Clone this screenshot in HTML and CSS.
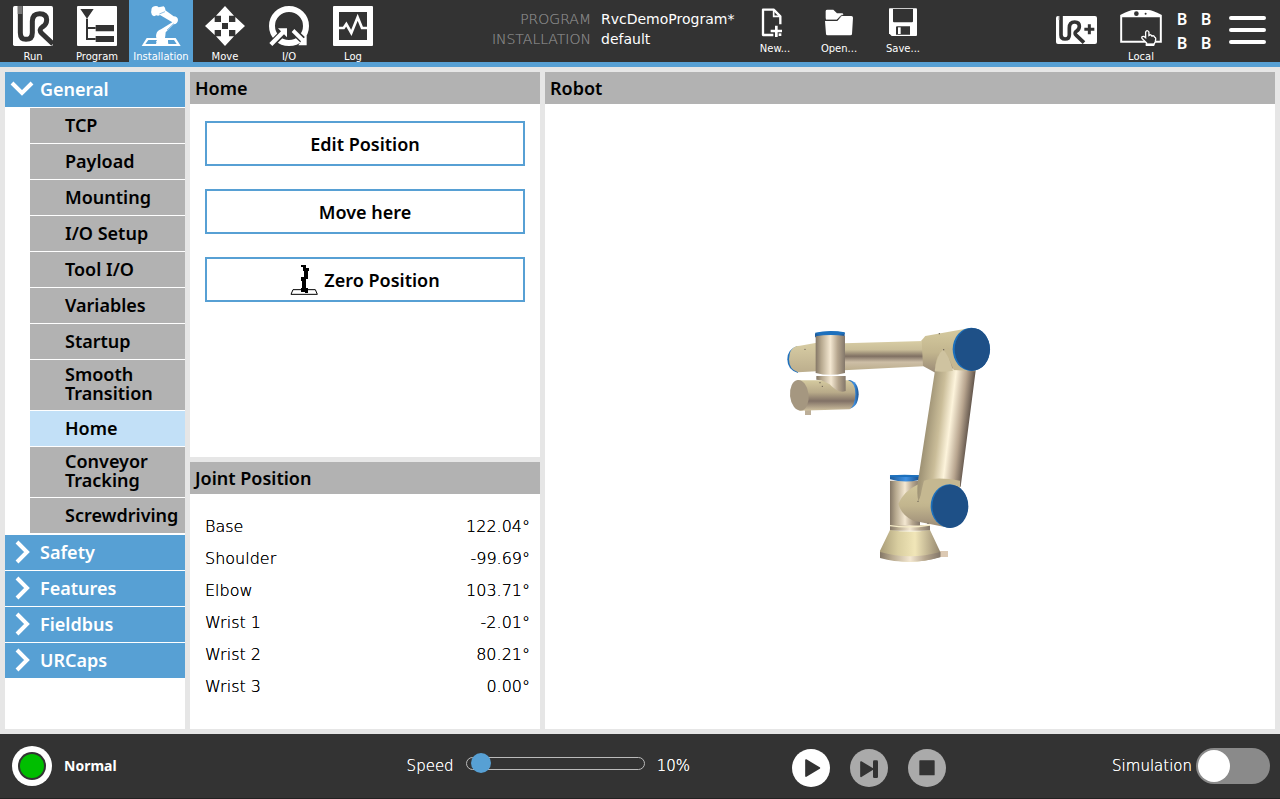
FILE: index.html
```html
<!DOCTYPE html>
<html lang="en">
<head>
<meta charset="utf-8">
<title>Installation</title>
<link rel="stylesheet" href="styles.css">
</head>
<body>
<header class="topbar">
  <nav class="tabs">
    <button class="tab" type="button">
      <svg class="tab-icon" viewBox="0 0 120 120"><rect width="120" height="120" rx="5" fill="#fff"/><g fill="none" stroke="#333" stroke-width="15"><path d="M22 0V80Q22 100 39 100Q58 100 58 80V46Q58 23 80 23Q101 23 101 41Q101 55 88 63Q76 71 86 82L120 114"/></g><path d="M14 0h14v24H14z" fill="#777"/></svg>
      <span>Run</span>
    </button>
    <button class="tab" type="button">
      <svg class="tab-icon" viewBox="0 0 120 120"><rect width="120" height="120" rx="3" fill="#fff"/><path d="M10 9H50L30 38Z M56 57h55v19H56z M56 90h55v18H56z" fill="#333"/><path d="M30 38V99H56M30 66H56" fill="none" stroke="#333" stroke-width="6"/></svg>
      <span>Program</span>
    </button>
    <button class="tab tab-active" type="button">
      <svg class="tab-icon" viewBox="0 0 120 120"><path d="M2 120L17 96H104L119 120Z" fill="#fff"/><path d="M13 114L22 102H48L45 114Z M80 102H99L107 114H82Z" fill="#57a0d4"/><path d="M45 108L50 100Q43 96 46 84Q49 73 60 70L94 49L57 27Q52 31 46 28L39 31Q28 26 31 14Q31 2 40 1Q48-2 53 4L68 1Q74 5 73 13L98 31Q110 31 111 42Q110 54 98 55L74 79Q73 91 72 96L81 101V108Z" fill="#fff"/><path d="M55 24L72 17M78 72L98 53" stroke="#57a0d4" stroke-width="2"/></svg>
      <span>Installation</span>
    </button>
    <button class="tab" type="button">
      <svg class="tab-icon" viewBox="0 0 120 120"><path fill="#fff" d="M60 0L87 29H72V48H91V33L120 60L91 87V72H72V91H87L60 120L33 91H48V72H29V87L0 60L29 33V48H48V29H33Z"/><path fill="#333" d="M51 51h18v18H51z"/></svg>
      <span>Move</span>
    </button>
    <button class="tab" type="button">
      <svg class="tab-icon" viewBox="0 0 120 120"><circle cx="60" cy="60" r="51" fill="none" stroke="#fff" stroke-width="18"/><g stroke="#333" stroke-width="21" fill="none"><path d="M4 118L50 72M68 70L116 116"/></g><path fill="#fff" d="M1 111L36 76L27 67H54V94L45 85L10 120Z M76 69L104 97L113 88V118H88L96 106L68 78Z"/></svg>
      <span>I/O</span>
    </button>
    <button class="tab" type="button">
      <svg class="tab-icon" viewBox="0 0 120 120"><rect width="120" height="120" rx="3" fill="#fff"/><path fill="#333" d="M18 18h84v84H18z"/><path d="M18 66H32L40 54L55 81L74 34L87 66H102" fill="none" stroke="#fff" stroke-width="8"/></svg>
      <span>Log</span>
    </button>
  </nav>
  <dl class="files">
    <dt>PROGRAM</dt><dd>RvcDemoProgram*</dd>
    <dt>INSTALLATION</dt><dd>default</dd>
  </dl>
  <div class="actions">
    <button class="action" type="button">
      <svg class="action-icon" viewBox="0 0 90 90"><path d="M61 49V25L41 5H9V81H40" fill="none" stroke="#fff" stroke-width="7" stroke-linejoin="round"/><path d="M41 5V25H61" fill="none" stroke="#fff" stroke-width="5"/><path d="M49 53V87M32 69H66" stroke="#fff" stroke-width="8"/><path d="M56 76h8v8h-8z" fill="#fff"/></svg>
      <span>New...</span>
    </button>
    <button class="action" type="button">
      <svg class="action-icon" viewBox="0 0 90 90"><path d="M5 29V9Q5 5 10 5H28L39 16H54Q58 16 58 20L45 31L39 35H6Z" fill="#fff"/><path d="M3 39H40L53 24H82Q87 24 87 29L84 78Q84 82 79 82H11Q6 82 6 78Z" fill="#fff"/><path d="M3 37H38L52 22H84" fill="none" stroke="#333" stroke-width="3"/></svg>
      <span>Open...</span>
    </button>
    <button class="action" type="button">
      <svg class="action-icon" viewBox="0 0 90 90"><path d="M5 1H84Q87 1 87 4V81Q87 84 84 84H11L3 76V4Q3 1 5 1Z" fill="#fff"/><path d="M15 3H75V40Q75 43 72 43H18Q15 43 15 40ZM27 55H66V80H24V58Q24 55 27 55Z" fill="#333"/><path d="M30 58h8v20h-8z" fill="#fff"/></svg>
      <span>Save...</span>
    </button>
  </div>
  <div class="status">
    <svg class="urplus" viewBox="0 0 123 84"><rect width="123" height="84" rx="6" fill="#fff"/><path d="M15 0V57Q15 69 27 69Q40 69 40 56V36Q40 18 56 18Q70 18 70 31Q70 41 62 45Q53 51 61 58L84 80" fill="none" stroke="#333" stroke-width="11"/><path d="M100 25V55M85 40H115" stroke="#333" stroke-width="9"/><path d="M8 0h4v12H8z" fill="#777"/></svg>
    <button class="tab local" type="button">
      <svg class="local-icon" viewBox="0 0 126 112"><path d="M0 15Q30 0 40 0H86Q96 0 126 15V99H0Z" fill="#fff"/><path d="M6 22H120V93H6Z" fill="#333"/><circle cx="49" cy="11" r="7" fill="#333"/><circle cx="77" cy="11" r="3" fill="#333"/><path d="M80 100L66 86Q63 79 72 80L77 84V67Q81 58 87 67V77Q93 72 96 79Q102 76 104 82Q110 82 106 96L101 107H80Z" fill="#333" stroke="#fff" stroke-width="4"/><path d="M77 101h26v7H77z" fill="#fff"/></svg>
      <span>Local</span>
    </button>
    <div class="checksum"><span>B</span><span>B</span><span>B</span><span>B</span></div>
    <button class="menu" type="button" aria-label="Menu"><svg viewBox="0 0 37 30"><path d="M2 3H35M2 15H35M2 27H35" stroke="#fff" stroke-width="4" stroke-linecap="round"/></svg></button>
  </div>
</header>

<main class="workspace">
  <nav class="tree">
    <button class="group" type="button"><svg viewBox="0 0 24 24"><path d="M2 6L12 16L22 6"/></svg>General</button>
    <div class="items">
      <button class="item" type="button">TCP</button>
      <button class="item" type="button">Payload</button>
      <button class="item" type="button">Mounting</button>
      <button class="item" type="button">I/O Setup</button>
      <button class="item" type="button">Tool I/O</button>
      <button class="item" type="button">Variables</button>
      <button class="item" type="button">Startup</button>
      <button class="item item-tall" type="button">Smooth<br>Transition</button>
      <button class="item item-active" type="button">Home</button>
      <button class="item item-tall" type="button">Conveyor<br>Tracking</button>
      <button class="item" type="button">Screwdriving</button>
    </div>
    <button class="group" type="button"><svg viewBox="0 0 24 24"><path d="M7 2L17 12L7 22"/></svg>Safety</button>
    <button class="group" type="button"><svg viewBox="0 0 24 24"><path d="M7 2L17 12L7 22"/></svg>Features</button>
    <button class="group" type="button"><svg viewBox="0 0 24 24"><path d="M7 2L17 12L7 22"/></svg>Fieldbus</button>
    <button class="group" type="button"><svg viewBox="0 0 24 24"><path d="M7 2L17 12L7 22"/></svg>URCaps</button>
  </nav>

  <div class="column">
    <section class="panel home">
      <h2 class="title">Home</h2>
      <div class="buttons">
        <button class="button" type="button">Edit Position</button>
        <button class="button" type="button">Move here</button>
        <button class="button" type="button"><svg class="zero" viewBox="0 0 84 90"><path d="M3 88L9 74H76L82 88Z" fill="none" stroke="#000" stroke-width="3"/><path d="M33 0H48V9H57V18H54V42H48V69H54V84H45V81H33V69H36V48H33V36H42V18H39V6H33Z" fill="#000"/></svg>Zero Position</button>
      </div>
    </section>
    <section class="panel">
      <h2 class="title">Joint Position</h2>
      <table class="joints">
        <tr><th scope="row">Base</th><td>122.04°</td></tr>
        <tr><th scope="row">Shoulder</th><td>-99.69°</td></tr>
        <tr><th scope="row">Elbow</th><td>103.71°</td></tr>
        <tr><th scope="row">Wrist 1</th><td>-2.01°</td></tr>
        <tr><th scope="row">Wrist 2</th><td>80.21°</td></tr>
        <tr><th scope="row">Wrist 3</th><td>0.00°</td></tr>
      </table>
    </section>
  </div>

  <section class="panel robot">
    <h2 class="title">Robot</h2>
    <div class="scene">
      <svg viewBox="0 0 730 625">
        <defs>
          <linearGradient id="upright"><stop offset="0" stop-color="#847766"/><stop offset=".2" stop-color="#b8aa90"/><stop offset=".5" stop-color="#f4e8d2"/><stop offset=".75" stop-color="#b5a58d"/><stop offset="1" stop-color="#83776a"/></linearGradient>
          <linearGradient id="fore" x2="0" y2="1"><stop offset="0" stop-color="#d8cda4"/><stop offset=".3" stop-color="#c9bd98"/><stop offset=".52" stop-color="#7f7063"/><stop offset=".72" stop-color="#cdbea6"/><stop offset="1" stop-color="#bcae8d"/></linearGradient>
          <linearGradient id="elbowcap" x2="0" y2="1"><stop offset="0" stop-color="#d8cda4"/><stop offset="1" stop-color="#bcae8d"/></linearGradient>
          <linearGradient id="wrist" x2="0" y2="1"><stop offset="0" stop-color="#d5ca9f"/><stop offset=".4" stop-color="#b8aa89"/><stop offset=".68" stop-color="#817166"/><stop offset="1" stop-color="#cfc19f"/></linearGradient>
          <linearGradient id="joint" x2="0" y2="1"><stop offset="0" stop-color="#d6cb9f"/><stop offset=".55" stop-color="#c2b58e"/><stop offset="1" stop-color="#9a8a76"/></linearGradient>
          <linearGradient id="arm" gradientUnits="userSpaceOnUse" x1="475" y1="300" x2="600" y2="315"><stop offset="0" stop-color="#a19577"/><stop offset=".3" stop-color="#cabd99"/><stop offset=".55" stop-color="#fdf4dc"/><stop offset=".8" stop-color="#b8a58f"/><stop offset="1" stop-color="#65584e"/></linearGradient>
          <linearGradient id="base"><stop offset="0" stop-color="#a99c78"/><stop offset=".3" stop-color="#d9cea0"/><stop offset=".58" stop-color="#f1e6b8"/><stop offset="1" stop-color="#94866e"/></linearGradient>
          <linearGradient id="cap"><stop offset="0" stop-color="#1d5b9b"/><stop offset=".55" stop-color="#3f91e2"/><stop offset="1" stop-color="#1c5390"/></linearGradient>
        </defs>
        <g transform="translate(225 206) scale(.33333)">
          <path d="M508 723H534V741H508Z" fill="#dcc9b3"/>
          <path d="M82 108Q52 118 52 148Q52 180 84 189Z" fill="#1f70bd"/>
          <path d="M90 107L140 98V184L84 187Q57 178 57 148Q58 116 78 109Z" fill="url(#elbowcap)"/>
          <path d="M222 100L460 93V169L222 181Z" fill="url(#fore)"/>
          <path d="M455 91L466 78L600 54L615 160L496 188L459 168Z" fill="url(#joint)"/>
          <path d="M360 512H450V648H360Z" fill="url(#upright)"/>
          <path d="M360 496H447V510Q404 520 360 508Z" fill="url(#cap)"/>
          <path d="M360 496Q404 492 447 496V501H360Z" fill="#1c70bd"/>
          <path d="M360 646H480V662H360Z" fill="url(#upright)"/>
          <path d="M360 647Q420 655 480 645" fill="none" stroke="#f5ebc7" stroke-width="4"/>
          <path d="M360 660Q420 669 480 660L511 726V740Q420 771 330 740V722Z" fill="url(#base)"/>
          <path d="M330 726Q420 751 511 726V742Q420 768 330 744Z" fill="url(#upright)"/>
          <path d="M442 524Q402 543 385 581Q394 616 430 632L540 654L572 525L495 505Z" fill="url(#joint)"/>
          <path d="M496 175L617 182L572 530L541 524L470 520L445 574Q440 550 443 518Z" fill="url(#arm)"/>
          <path d="M462 512Q500 499 570 512V570L449 574Q455 535 462 512Z" fill="#c5b891"/>
          <path d="M494 182Q500 128 518 118Q535 135 551 180L617 184L610 120L510 115Z" fill="#c5b891"/>
          <path d="M519 119Q535 130 549 182Q523 187 494 184Q500 133 519 119Z" fill="#cfc3a0"/>
          <ellipse cx="604" cy="118" rx="56" ry="65" fill="#1c70bd"/><ellipse cx="607" cy="118" rx="53" ry="64" fill="#1e5087"/>
          <ellipse cx="538" cy="588" rx="56" ry="65" fill="#1c70bd"/><ellipse cx="541" cy="589" rx="54" ry="65" fill="#1e5087"/>
          <path d="M135 70Q180 60 224 68V82H135Z" fill="url(#cap)"/>
          <path d="M135 68Q180 58 224 67V72L195 75L150 74Z" fill="#1c70bd"/>
          <path d="M137 79Q180 72 225 78V189Q181 200 137 189Z" fill="url(#upright)"/>
          <path d="M105 300H123V315H105Z" fill="#bcae98"/>
          <path d="M235 210Q265 212 266 253Q264 293 237 296Z" fill="url(#cap)"/>
          <path d="M88 211H235Q257 219 256 253Q255 287 239 298L88 302Z" fill="url(#wrist)"/>
          <path d="M139 198H227V243Q206 252 179 223L154 211L139 209Z" fill="url(#upright)"/>
          <ellipse cx="88" cy="256" rx="28" ry="46" transform="rotate(-6 88 256)" fill="#a59780"/>
          <g fill="#635a50"><circle cx="105" cy="118" r="2"/><circle cx="150" cy="218" r="2"/><circle cx="157" cy="229" r="2"/><circle cx="508" cy="71" r="2"/><circle cx="521" cy="119" r="2"/><circle cx="444" cy="574" r="2"/><circle cx="474" cy="640" r="2"/></g>
        </g>
      </svg>
    </div>
  </section>
</main>

<footer class="footer">
  <div class="mode"><svg viewBox="0 0 40 40"><circle cx="20" cy="20" r="20" fill="#fff"/><circle cx="20" cy="20" r="14" fill="#333"/><circle cx="20" cy="20" r="12" fill="#00be00"/></svg>Normal</div>
  <div class="speed"><label for="speed">Speed</label><input id="speed" type="range" min="0" max="100" value="3"><output for="speed">10%</output></div>
  <div class="playback">
    <button type="button" class="round round-on" aria-label="Play"><svg viewBox="0 0 114 114"><path d="M42 33L82 57L42 81Z" fill="#333" stroke="#333" stroke-width="5" stroke-linejoin="round"/></svg></button>
    <button type="button" class="round" aria-label="Step"><svg viewBox="0 0 114 114"><path d="M33 39L68 60L33 82Z" fill="#333" stroke="#333" stroke-width="5" stroke-linejoin="round"/><rect x="69" y="34" width="15" height="53" rx="4" fill="#333"/></svg></button>
    <button type="button" class="round" aria-label="Stop"><svg viewBox="0 0 114 114"><rect x="34" y="34" width="46" height="45" rx="2" fill="#333"/></svg></button>
  </div>
  <label class="simulation">Simulation<input type="checkbox" role="switch"></label>
</footer>
</body>
</html>
```

FILE: styles.css
```css
* { box-sizing: border-box; }

body {
  margin: 0;
  min-height: 100vh;
  display: flex;
  flex-direction: column;
  background: #e6e6e6;
  color: #000;
  font: 200 16px/20px "DejaVu Sans", "DejaVu Sans Light", sans-serif;
}

button {
  margin: 0;
  padding: 0;
  border: 0;
  background: none;
  color: inherit;
  font: inherit;
  cursor: pointer;
}

svg { display: block; flex: none; }

.topbar {
  display: flex;
  flex: none;
  height: 67px;
  border-bottom: 5px solid #57a0d4;
  background: #333;
  color: #fff;
}

.tabs { display: flex; padding-left: 1px; }

.tab {
  display: flex;
  flex-direction: column;
  align-items: center;
  width: 64px;
  padding-top: 6px;
  font-weight: 400;
  font-size: 10px;
  line-height: 12px;
}

.tab-active { background: #57a0d4; }
.tab-icon { width: 40px; height: 40px; margin-bottom: 5px; }

.files {
  display: grid;
  grid-template-columns: 206px 142px;
  column-gap: 10px;
  align-content: start;
  margin: 0;
  padding-top: 9px;
  font-size: 14px;
}

.files dt { color: #808080; text-align: right; text-shadow: 0 0 0 currentColor; }
.files dd { margin: 0; font-weight: 400; }

.actions { display: flex; }

.action {
  display: flex;
  flex-direction: column;
  align-items: center;
  width: 64px;
  padding-top: 8px;
  font-weight: 400;
  font-size: 10px;
  line-height: 12px;
}

.action-icon { width: 30px; height: 30px; margin-bottom: 5px; }

.status { display: flex; margin-left: auto; padding-right: 14px; }
.urplus { width: 41px; height: 28px; margin: 16px 15px 0 0; }
.local { width: 58px; padding-top: 10px; }
.local-icon { width: 42px; height: 37px; margin-bottom: 4px; }

.checksum {
  display: grid;
  grid-template-columns: 24px 24px;
  grid-auto-rows: 24px;
  padding-top: 7px;
  font: 600 16px/24px "Noto Sans", sans-serif;
  text-align: center;
}

.menu { align-self: flex-start; margin: 15px 0 0 11px; }
.menu svg { width: 37px; height: 30px; }

.workspace {
  display: grid;
  flex: 1;
  grid-template-columns: 180px 350px 1fr;
  gap: 5px;
  padding: 5px;
}

.tree {
  display: flex;
  flex-direction: column;
  gap: 1px;
  background: #fff;
  font: 600 18px/20px "Noto Sans", "Open Sans", sans-serif;
}

.group {
  display: flex;
  align-items: center;
  gap: 6px;
  height: 35px;
  padding: 0 5px 2px;
  background: #57a0d4;
  color: #fff;
}

.group svg { width: 24px; height: 24px; fill: none; stroke: #fff; stroke-width: 4; }

.items {
  display: flex;
  flex-direction: column;
  gap: 1px;
  margin: 0 0 1px 25px;
}

.item {
  height: 35px;
  padding: 0 0 2px 35px;
  background: #b2b2b2;
  text-align: left;
}

.item-tall { height: 50px; line-height: 19px; }
.item-active { background: #c2e0f7; }

.column { display: flex; flex-direction: column; gap: 5px; }
.panel { background: #fff; }
.home { flex: 1; }

.title {
  margin: 0;
  padding: 6px 5px;
  background: #b2b2b2;
  font: 600 18px/20px "Noto Sans", "Open Sans", sans-serif;
}

.buttons { display: grid; gap: 23px; padding: 17px 15px; }

.button {
  display: flex;
  align-items: center;
  justify-content: center;
  gap: 6px;
  height: 45px;
  border: 2px solid #57a0d4;
  background: #fff;
  font: 600 18px/20px "Noto Sans", "Open Sans", sans-serif;
}

.zero { width: 28px; height: 30px; }

.joints { width: 100%; margin: 17px 0 26px; border-collapse: collapse; text-shadow: 0 0 0 currentColor; }
.joints th, .joints td { height: 32px; padding: 0; font-weight: 200; }
.joints th { padding-left: 15px; text-align: left; }
.joints td { padding-right: 10px; text-align: right; }

.robot { display: flex; flex-direction: column; }
.scene { flex: 1; }
.scene svg { width: 100%; height: 100%; }

.footer {
  display: flex;
  align-items: center;
  flex: none;
  height: 65px;
  padding: 0 10px 0 12px;
  border-bottom: 1px solid #222;
  background: #333;
  color: #fff;
  font-size: 15px;
}

.mode {
  display: flex;
  align-items: center;
  gap: 12px;
  font: 700 14px/20px "Noto Sans", "Open Sans", sans-serif;
}

.mode svg { width: 40px; height: 40px; }

.speed {
  display: flex;
  align-items: center;
  gap: 12px;
  margin-left: 290px;
  text-shadow: 0 0 0 currentColor;
}

.speed input {
  appearance: none;
  width: 179px;
  height: 20px;
  margin: 0 0 5px;
  background: none;
}

.speed input::-webkit-slider-runnable-track {
  height: 13px;
  border: 1px solid #bbb;
  border-radius: 7px;
}

.speed input::-webkit-slider-thumb {
  appearance: none;
  width: 20px;
  height: 20px;
  margin-top: -5px;
  border-radius: 50%;
  background: #57a0d4;
}

.playback { display: flex; gap: 20px; margin-left: 102px; padding-top: 3px; }
.round { width: 38px; height: 38px; border-radius: 50%; background: #aaa; }
.round svg { width: 38px; height: 38px; }
.round-on { background: #fff; }

.simulation {
  display: flex;
  align-items: center;
  gap: 4px;
  margin-left: auto;
  text-shadow: 0 0 0 currentColor;
}

.simulation input {
  display: flex;
  align-items: center;
  appearance: none;
  width: 74px;
  height: 36px;
  margin: 0;
  padding: 0 2px;
  border-radius: 18px;
  background: #8a8a8a;
}

.simulation input::before {
  content: "";
  width: 32px;
  height: 32px;
  border-radius: 50%;
  background: #fff;
}

.simulation input:checked { justify-content: flex-end; }
```
